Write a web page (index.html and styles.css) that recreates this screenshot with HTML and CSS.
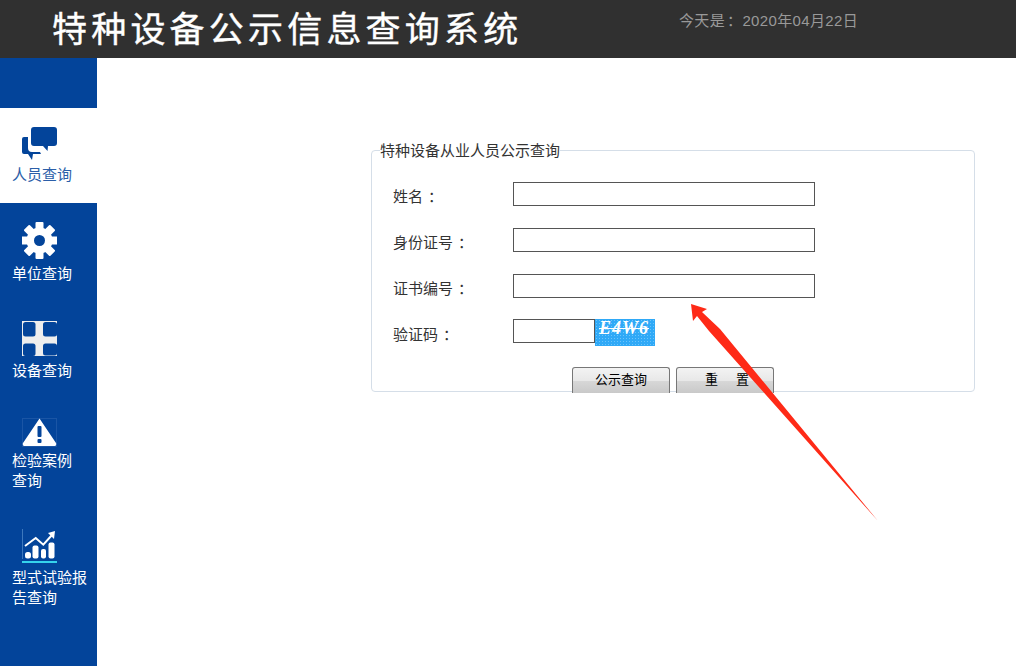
FILE: index.html
```html
<!DOCTYPE html>
<html lang="zh-CN">
<head>
<meta charset="utf-8">
<title>特种设备公示信息查询系统</title>
<link rel="stylesheet" href="styles.css">
</head>
<body>
<header class="topbar">
  <h1 class="title">特种设备公示信息查询系统</h1>
  <div class="today">今天是<span class="colon">：</span>2020年04月22日</div>
</header>
<div class="layout">
  <nav class="sidebar">
    <a class="nav-item nav-active nav-tight">
      <svg class="icon icon-chat" viewBox="0 0 35 33"><path d="M12 0h20a3 3 0 0 1 3 3v13a3 3 0 0 1-3 3h-6l-.5 5-4.500-5h-9a3 3 0 0 1-3-3V3a3 3 0 0 1 3-3z" fill="#03449a"/><path d="M6 10v11a4 4 0 0 0 4 4h8l1 2h-8l-1 6-4-6H2a2 2 0 0 1-2-2V12a2 2 0 0 1 2-2z" fill="#03449a"/></svg>
      <span class="nav-label">人员查询</span>
    </a>
    <a class="nav-item nav-tight">
      <svg class="icon icon-gear" viewBox="0 0 35 37"><g fill="#fff"><circle cx="17.500" cy="18.500" r="13"/><rect x="13.500" y="0" width="8" height="37" rx="1"/><rect x="13.500" y="0" width="8" height="37" rx="1" transform="rotate(45 17.500 18.500)"/><rect x="13.500" y="0" width="8" height="37" rx="1" transform="rotate(90 17.500 18.500)"/><rect x="13.500" y="0" width="8" height="37" rx="1" transform="rotate(135 17.500 18.500)"/></g><circle cx="17.500" cy="18.500" r="5.500" fill="#03449a"/></svg>
      <span class="nav-label">单位查询</span>
    </a>
    <a class="nav-item nav-tight">
      <svg class="icon icon-cross" viewBox="0 0 35 35"><rect width="35" height="35" fill="#eee"/><rect x="1" y="1" width="12.500" height="14.500" rx="2.500" fill="#03449a"/><rect x="21" y="1" width="14" height="14.500" rx="2.500" fill="#03449a"/><rect x="1" y="22.500" width="12.500" height="12.500" rx="2.500" fill="#03449a"/><rect x="21" y="22.500" width="14" height="12" rx="2.500" fill="#03449a"/></svg>
      <span class="nav-label">设备查询</span>
    </a>
    <a class="nav-item">
      <svg class="icon icon-warn" viewBox="0 0 35 29"><rect x=".5" y=".5" width="34" height="28" fill="none" stroke="#1a55a5"/><path d="M17.500 .5 34 25a2 2 0 0 1-2 3H3a2 2 0 0 1-2-3z" fill="#fff"/><rect x="15.500" y="8" width="4" height="11" rx="1" fill="#03449a"/><rect x="15.500" y="21" width="4" height="4" rx="1" fill="#03449a"/></svg>
      <span class="nav-label">检验案例<br>查询</span>
    </a>
    <a class="nav-item">
      <svg class="icon icon-chart" viewBox="0 0 35 35"><rect x="0" y="0" width="1" height="30" fill="#3d78bd"/><polyline points="3,17 13.700,9 21.300,15.700 30,6" fill="none" stroke="#fff" stroke-width="2"/><polygon points="26,4 33,2 32,10" fill="#fff"/><rect x="3" y="23" width="6" height="6.500" rx="2.500" fill="#fff"/><rect x="10.500" y="16.500" width="6" height="13" rx="2" fill="#fff"/><rect x="19" y="20" width="5" height="9.500" rx="2" fill="#fff"/><rect x="26.500" y="13.500" width="6" height="16" rx="2" fill="#fff"/><rect x="0" y="32" width="35" height="2" fill="#35d3ec"/></svg>
      <span class="nav-label">型式试验报<br>告查询</span>
    </a>
  </nav>
  <main class="content">
    <fieldset class="panel">
      <legend class="panel-title">特种设备从业人员公示查询</legend>
      <div class="row"><label class="row-label">姓名<span class="colon">：</span></label><input class="field" type="text"></div>
      <div class="row"><label class="row-label">身份证号<span class="colon">：</span></label><input class="field" type="text"></div>
      <div class="row"><label class="row-label">证书编号<span class="colon">：</span></label><input class="field" type="text"></div>
      <div class="row row-code"><label class="row-label">验证码<span class="colon">：</span></label><input class="field field-code" type="text"><span class="captcha">E4W6</span></div>
      <div class="actions">
        <button class="btn" type="button">公示查询</button>
        <button class="btn btn-reset" type="button">重&nbsp;&nbsp;&nbsp;&nbsp;&nbsp;置</button>
      </div>
    </fieldset>
  </main>
</div>
<svg class="arrow" viewBox="0 0 200 230" width="200" height="230"><polygon points="1,0 17,5 12,8 30,25 188,217 19,27 7,12 3,17" fill="#fe2a17"/></svg>
</body>
</html>
```
FILE: styles.css
```css
* { box-sizing: border-box; }
html, body { margin: 0; height: 100%; overflow: hidden; }
body {
  position: relative;
  background: #fff;
  font-family: "Liberation Sans", "Noto Sans CJK SC", sans-serif;
  font-size: 15px;
  color: #333;
}
.colon { margin-left: 5px; }
.topbar {
  height: 58px;
  background: #303030;
  display: flex;
  flex-shrink: 0;
}
.title {
  margin: 0;
  width: 679px;
  padding-left: 52px;
  font-size: 35px;
  line-height: 60px;
  font-weight: 400;
  letter-spacing: 4.2px;
  -webkit-text-stroke: 0.4px #fff;
  color: #fff;
  white-space: nowrap;
}
.today {
  line-height: 41px;
  letter-spacing: 0.35px;
  color: #999;
  white-space: nowrap;
}
.today .colon { margin-left: 2px; }
.layout { display: flex; height: 608px; }
.sidebar {
  width: 97px;
  flex-shrink: 0;
  background: #03449a;
  padding-top: 50px;
}
.nav-item {
  display: flex;
  flex-direction: column;
  align-items: flex-start;
  padding: 19px 0 19px 12px;
  color: #fff;
}
.nav-tight { padding-bottom: 18px; }
.nav-tight .icon { margin-bottom: 5px; }
.nav-active { background: #fff; color: #2b5ea8; }
.icon { display: block; width: 35px; margin: 0 0 4px 10px; }
.icon-chat { height: 33px; }
.icon-gear { height: 37px; }
.icon-cross { height: 35px; }
.icon-warn { height: 29px; }
.icon-chart { height: 35px; }
.nav-label { font-size: 15px; line-height: 20px; white-space: nowrap; }
.content { flex: 1; padding: 82px 0 0 274px; }
.panel {
  width: 604px;
  height: 252px;
  margin: 0;
  padding: 21px 0 0 21px;
  border: 1px solid #d5dee8;
  border-radius: 4px;
}
.panel-title {
  margin-left: -13px;
  padding: 1px 0 0;
  font-size: 15px;
  line-height: 20px;
  color: #333;
}
.row {
  display: flex;
  height: 24px;
  margin-bottom: 22px;
  align-items: flex-start;
}
.row-label { width: 120px; line-height: 30px; white-space: nowrap; }
.field {
  width: 302px;
  height: 24px;
  margin: 0;
  padding: 0;
  border: 1px solid #555;
  background: #fff;
  border-radius: 0;
}
.field-code { width: 82px; }
.row-code { height: 27px; margin-top: -1px; margin-bottom: 21px; }
.row-code .row-label { line-height: 32px; }
.captcha {
  width: 60px;
  height: 27px;
  background-color: #2fa9f7;
  background-image: radial-gradient(#6cc4fa 0.5px, transparent 0.8px);
  background-size: 3px 3px;
  color: #fff;
  font-family: "Liberation Serif", serif;
  font-size: 18px;
  font-weight: 700;
  font-style: italic;
  letter-spacing: 1px;
  line-height: 18px;
  padding-left: 4px;
  text-decoration: line-through;
  white-space: nowrap;
}
.actions { display: flex; gap: 6px; padding-left: 179px; }
.btn {
  width: 98px;
  height: 26px;
  padding: 0 0 4px;
  border: 1px solid #777;
  border-bottom: 0;
  border-radius: 3px 3px 0 0;
  background: linear-gradient(#f3f3f3 0, #e8e8e8 50%, #d8d8d8 50%, #c9c9c9 100%);
  font-family: "Liberation Sans", "Noto Sans CJK SC", sans-serif;
  font-size: 13px;
  color: #000;
}
.btn-reset { padding-left: 4px; }
.arrow { position: absolute; left: 690px; top: 304px; }
```
